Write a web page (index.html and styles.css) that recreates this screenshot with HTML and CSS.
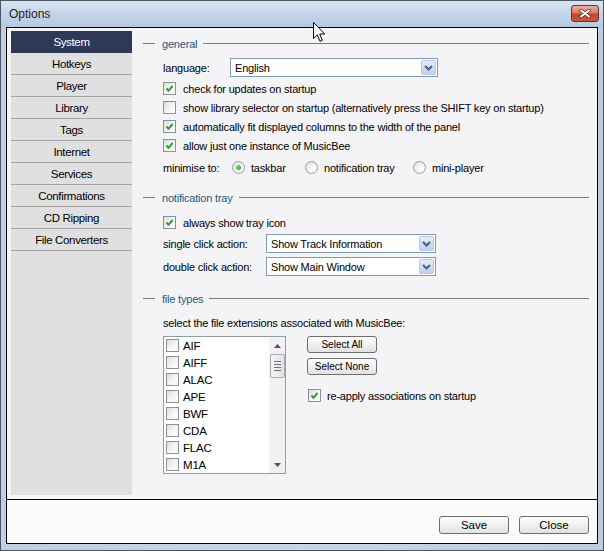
FILE: index.html
```html
<!DOCTYPE html>
<html>
<head>
<meta charset="utf-8">
<title>Options</title>
<link rel="stylesheet" href="styles.css">
</head>
<body>
<div class="window">
  <div class="titlebar">
    <span class="title">Options</span>
    <span class="close-btn">
      <svg width="12" height="9" viewBox="0 0 12 9"><path d="M2 1.5 L10 7.5 M10 1.5 L2 7.5" stroke="#6b2a1e" stroke-width="3.4" stroke-linecap="round"/><path d="M2 1.5 L10 7.5 M10 1.5 L2 7.5" stroke="#fff" stroke-width="2" stroke-linecap="round"/></svg>
    </span>
  </div>
  <div class="client">
    <div class="main">
      <nav class="nav">
        <div class="nav-item active">System</div>
        <div class="nav-item">Hotkeys</div>
        <div class="nav-item">Player</div>
        <div class="nav-item">Library</div>
        <div class="nav-item">Tags</div>
        <div class="nav-item">Internet</div>
        <div class="nav-item">Services</div>
        <div class="nav-item">Confirmations</div>
        <div class="nav-item">CD Ripping</div>
        <div class="nav-item">File Converters</div>
      </nav>
      <div class="panel">
        <section class="group">
          <div class="group-head"><span class="dash"></span><span class="group-title">general</span><span class="rule"></span></div>
          <div class="group-body">
            <div class="field-row lang-row">
              <span class="label w-lang">language:</span>
              <div class="combo combo-lang"><span class="combo-text">English</span><span class="arrow"><svg width="9" height="6" viewBox="0 0 9 6"><path d="M1 1 L4.5 4.5 L8 1" fill="none" stroke="#4b5d85" stroke-width="2"/></svg></span></div>
            </div>
            <div class="check-row first"><span class="cb"><svg width="11" height="11" viewBox="0 0 11 11"><path d="M2.5 5.5 L4.5 7.8 L8.6 3" fill="none" stroke="#2b9f2b" stroke-width="2"/></svg></span>check for updates on startup</div>
            <div class="check-row"><span class="cb"></span>show library selector on startup (alternatively press the SHIFT key on startup)</div>
            <div class="check-row"><span class="cb"><svg width="11" height="11" viewBox="0 0 11 11"><path d="M2.5 5.5 L4.5 7.8 L8.6 3" fill="none" stroke="#2b9f2b" stroke-width="2"/></svg></span>automatically fit displayed columns to the width of the panel</div>
            <div class="check-row"><span class="cb"><svg width="11" height="11" viewBox="0 0 11 11"><path d="M2.5 5.5 L4.5 7.8 L8.6 3" fill="none" stroke="#2b9f2b" stroke-width="2"/></svg></span>allow just one instance of MusicBee</div>
            <div class="radio-row">
              <span class="label w-min">minimise to:</span>
              <span class="opt opt1"><span class="radio on"><span class="dot"></span></span>taskbar</span>
              <span class="opt opt2"><span class="radio"></span>notification tray</span>
              <span class="opt"><span class="radio"></span>mini-player</span>
            </div>
          </div>
        </section>
        <section class="group spaced">
          <div class="group-head"><span class="dash"></span><span class="group-title">notification tray</span><span class="rule"></span></div>
          <div class="group-body">
            <div class="check-row tray"><span class="cb"><svg width="11" height="11" viewBox="0 0 11 11"><path d="M2.5 5.5 L4.5 7.8 L8.6 3" fill="none" stroke="#2b9f2b" stroke-width="2"/></svg></span>always show tray icon</div>
            <div class="combo-row">
              <span class="label w-click">single click action:</span>
              <div class="combo combo-click"><span class="combo-text">Show Track Information</span><span class="arrow"><svg width="9" height="6" viewBox="0 0 9 6"><path d="M1 1 L4.5 4.5 L8 1" fill="none" stroke="#4b5d85" stroke-width="2"/></svg></span></div>
            </div>
            <div class="combo-row">
              <span class="label w-click">double click action:</span>
              <div class="combo combo-click"><span class="combo-text">Show Main Window</span><span class="arrow"><svg width="9" height="6" viewBox="0 0 9 6"><path d="M1 1 L4.5 4.5 L8 1" fill="none" stroke="#4b5d85" stroke-width="2"/></svg></span></div>
            </div>
          </div>
        </section>
        <section class="group spaced files">
          <div class="group-head"><span class="dash"></span><span class="group-title">file types</span><span class="rule"></span></div>
          <div class="group-body">
            <div class="hint">select the file extensions associated with MusicBee:</div>
            <div class="filearea">
              <div class="listbox">
                <div class="list-items">
                  <div class="li"><span class="cb"></span>AIF</div>
                  <div class="li"><span class="cb"></span>AIFF</div>
                  <div class="li"><span class="cb"></span>ALAC</div>
                  <div class="li"><span class="cb"></span>APE</div>
                  <div class="li"><span class="cb"></span>BWF</div>
                  <div class="li"><span class="cb"></span>CDA</div>
                  <div class="li"><span class="cb"></span>FLAC</div>
                  <div class="li"><span class="cb"></span>M1A</div>
                </div>
                <div class="scrollbar">
                  <span class="sb-arrow"><svg width="7" height="4" viewBox="0 0 7 4"><path d="M0 4 L3.5 0 L7 4 Z" fill="#555"/></svg></span>
                  <span class="thumb"><span class="grip"></span><span class="grip"></span><span class="grip"></span><span class="grip"></span></span>
                  <span class="track"></span>
                  <span class="sb-arrow"><svg width="7" height="4" viewBox="0 0 7 4"><path d="M0 0 L3.5 4 L7 0 Z" fill="#555"/></svg></span>
                </div>
              </div>
              <div class="side">
                <button class="btn btn-sm">Select All</button>
                <button class="btn btn-sm second">Select None</button>
                <div class="check-row reapply"><span class="cb"><svg width="11" height="11" viewBox="0 0 11 11"><path d="M2.5 5.5 L4.5 7.8 L8.6 3" fill="none" stroke="#2b9f2b" stroke-width="2"/></svg></span>re-apply associations on startup</div>
              </div>
            </div>
          </div>
        </section>
      </div>
    </div>
    <div class="footer">
      <button class="btn">Save</button>
      <button class="btn">Close</button>
    </div>
  </div>
  <svg class="cursor" width="13" height="21" viewBox="0 0 13 21"><path d="M0.5 0.5 L0.5 16.5 L4.3 12.9 L7 19.3 L9.3 18.3 L6.7 12 L11.7 12 Z" fill="#fff" stroke="#000" stroke-width="1" stroke-linejoin="miter"/></svg>
</div>
</body>
</html>
```
FILE: styles.css
```css
* { box-sizing: border-box; }
html, body { margin: 0; padding: 0; }
body {
  width: 604px;
  height: 551px;
  overflow: hidden;
  font-family: "Liberation Sans", Arial, sans-serif;
  font-size: 11px;
  letter-spacing: -0.2px;
  color: #000;
  background: #fff;
}
.window {
  position: relative;
  width: 604px;
  height: 551px;
  border: 1px solid #4a5663;
  background: linear-gradient(90deg, #bfd0e4, #c6d6e9 50%, #bccde2);
  display: flex;
  flex-direction: column;
}
.titlebar {
  height: 26px;
  flex: none;
  display: flex;
  align-items: center;
  justify-content: space-between;
  padding: 0 4px 1px 8px;
  background: linear-gradient(#dae5f2, #c5d6ea 45%, #b4c9e1);
}
.title { font-size: 12px; color: #1c1c1c; letter-spacing: 0; }
.close-btn {
  width: 28px;
  height: 17px;
  border: 1px solid #6a2f25;
  border-radius: 3px;
  background: linear-gradient(#eab0a2, #d77a64 45%, #c2452b 55%, #c9583d);
  display: flex;
  align-items: center;
  justify-content: center;
}
.client {
  flex: none;
  height: 517px;
  margin: 0 5px 6px;
  border: 1px solid #000;
  background: #f7f7f9;
  display: flex;
  flex-direction: column;
}
.main {
  height: 471px;
  flex: none;
  display: flex;
  padding: 3px 0 4px 4px;
  background: #f4f4f6;
}
.nav {
  width: 121px;
  flex: none;
  background: #e0e0e0;
  display: flex;
  flex-direction: column;
}
.nav-item {
  height: 22px;
  flex: none;
  border-bottom: 1px solid #a4a4a4;
  display: flex;
  align-items: center;
  justify-content: center;
  font-size: 11.5px;
  letter-spacing: -0.35px;
}
.nav-item.active {
  background: #2e3958;
  border-bottom-color: #2e3958;
  color: #fff;
}
.panel {
  flex: 1;
  padding: 6px 8px 0 11px;
}
.group-head {
  height: 13px;
  display: flex;
  align-items: center;
  color: #1f5a84;
}
.dash { width: 12px; height: 1px; background: #7c7c7c; margin-right: 7px; }
.rule { flex: 1; height: 1px; background: #7c7c7c; margin-left: 6px; }
.group.spaced { margin-top: 13px; }
.group.files { margin-top: 14px; }
.group-body { padding-left: 20px; }
.label { flex: none; }
.w-lang { width: 67px; }
.w-min { width: 69px; }
.w-click { width: 103px; }
.field-row {
  margin-top: 8px;
  display: flex;
  align-items: center;
  height: 19px;
}
.combo {
  height: 19px;
  border: 1px solid #7f9db9;
  background: #fff;
  display: flex;
  align-items: center;
  padding-left: 4px;
}
.combo-lang { width: 208px; }
.combo-click { width: 170px; }
.combo-text { flex: 1; }
.arrow {
  width: 15px;
  height: 15px;
  margin-right: 1px;
  border: 1px solid #b6c9e6;
  border-radius: 2px;
  background: linear-gradient(#e4ecf8, #cddbf1 60%, #bfd1ee);
  display: flex;
  align-items: center;
  justify-content: center;
}
.check-row {
  height: 19px;
  display: flex;
  align-items: center;
}
.check-row.first { margin-top: 2px; }
.check-row.tray { margin-top: 9px; }
.cb {
  width: 13px;
  height: 13px;
  flex: none;
  margin-right: 7px;
  border: 1px solid #8e9297;
  background: linear-gradient(135deg, #dcdcdc, #f4f4f4 50%, #fff);
  display: flex;
  align-items: center;
  justify-content: center;
}
.radio-row {
  margin-top: 2px;
  height: 21px;
  display: flex;
  align-items: center;
}
.opt { display: flex; align-items: center; flex: none; }
.opt1 { width: 73px; }
.opt2 { width: 108px; }
.radio {
  width: 13px;
  height: 13px;
  margin-right: 6px;
  border: 1px solid #9a9ea4;
  border-radius: 50%;
  background: radial-gradient(circle at 65% 65%, #fff, #f0f0f0 50%, #d8d8d8);
  display: flex;
  align-items: center;
  justify-content: center;
}
.dot {
  width: 5px;
  height: 5px;
  border-radius: 50%;
  background: radial-gradient(circle at 40% 40%, #7bd47b, #2a9a2a);
}
.combo-row {
  height: 23px;
  display: flex;
  align-items: center;
}
.hint {
  margin-top: 11px;
  line-height: 14px;
}
.filearea {
  margin-top: 6px;
  display: flex;
  align-items: flex-start;
  gap: 21px;
}
.listbox {
  width: 123px;
  height: 138px;
  border: 1px solid #8c9db2;
  background: #fff;
  display: flex;
}
.list-items { flex: 1; }
.li {
  height: 17px;
  display: flex;
  align-items: center;
  padding-left: 2px;
  font-size: 11.5px;
}
.li .cb { margin-right: 4px; }
.scrollbar {
  width: 16px;
  background: #f1f1f1;
  display: flex;
  flex-direction: column;
  align-items: center;
}
.sb-arrow {
  height: 17px;
  width: 16px;
  display: flex;
  align-items: center;
  justify-content: center;
}
.thumb {
  width: 15px;
  height: 24px;
  border: 1px solid #a3acb8;
  border-radius: 2px;
  background: linear-gradient(90deg, #f4f4f4, #e2e2e2);
  display: flex;
  flex-direction: column;
  align-items: center;
  justify-content: center;
  gap: 2px;
}
.grip { width: 7px; height: 1px; background: #6f6f6f; }
.track { flex: 1; }
.side {
  display: flex;
  flex-direction: column;
  align-items: flex-start;
}
.btn {
  width: 70px;
  height: 18px;
  padding: 0;
  border: 1px solid #6e6e6e;
  border-radius: 3px;
  background: linear-gradient(#fefefe, #f0f0f0 50%, #e2e2e2);
  font-family: "Liberation Sans", Arial, sans-serif;
  font-size: 11.5px;
  color: #000;
}
.btn-sm { height: 17px; font-size: 10px; }
.btn-sm.second { margin-top: 5px; }
.reapply { margin-top: 11px; margin-left: 1px; }
.reapply .cb { margin-right: 6px; }
.footer {
  flex: 1;
  border-top: 1px solid #000;
  background: #fbfbfb;
  display: flex;
  justify-content: flex-end;
  gap: 10px;
  padding: 16px 8px 0 0;
}
.cursor {
  position: absolute;
  left: 312px;
  top: 21px;
}
```
